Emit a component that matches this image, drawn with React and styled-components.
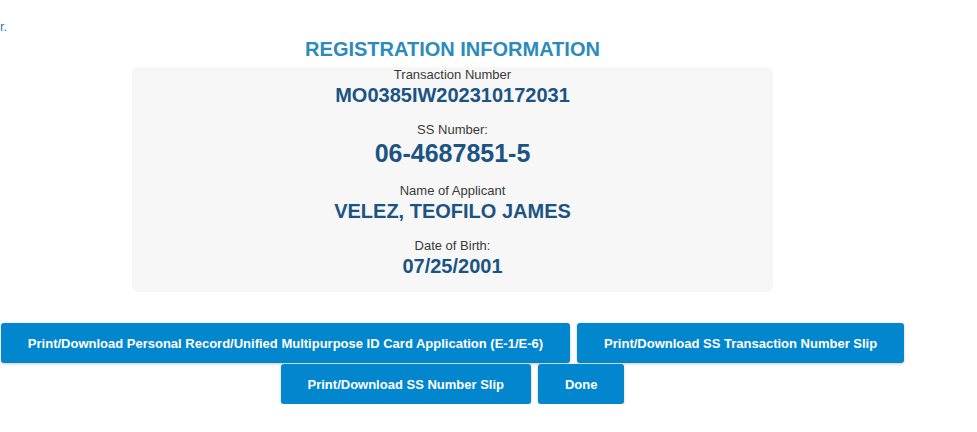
import React from "react";
import styled, { createGlobalStyle } from "styled-components";

const GlobalStyle = createGlobalStyle`
  html, body { margin: 0; padding: 0; background: #ffffff; }
  body { font-family: "Liberation Sans", Arial, sans-serif; }
`;

const Page = styled.div`
  width: 905px;
  display: flex;
  flex-direction: column;
  align-items: center;
`;

const TopNote = styled.div`
  align-self: flex-start;
  margin-top: 19px;
  font-size: 13px;
  line-height: 15px;
  color: #2a7fb8;
`;

const Title = styled.h2`
  margin: 4px 0 6px;
  font-size: 20px;
  line-height: 23px;
  font-weight: 700;
  color: #2b8bba;
  text-align: center;
`;

const Card = styled.div`
  width: 641px;
  box-sizing: border-box;
  background: #f7f7f7;
  border-radius: 6px;
  padding: 0 0 14px;
  display: flex;
  flex-direction: column;
  align-items: center;
  gap: 15px;
`;

const Field = styled.div`
  display: flex;
  flex-direction: column;
  align-items: center;
  gap: 2px;
`;

const Label = styled.div`
  font-size: 13px;
  line-height: 15px;
  color: #3a3a3a;
`;

const Value = styled.div`
  font-size: ${(p) => (p.$big ? "25px" : "20px")};
  line-height: ${(p) => (p.$big ? "29px" : "23px")};
  font-weight: 700;
  color: #1b5482;
`;

const Actions = styled.div`
  margin-top: 31px;
  display: flex;
  flex-direction: column;
  align-items: center;
  gap: 1px;
`;

const ButtonRow = styled.div`
  display: flex;
  justify-content: center;
  gap: 7px;
`;

const Button = styled.button`
  height: 40px;
  padding: 0 27px;
  border: none;
  border-radius: 3px;
  background: #0286ce;
  color: #ffffff;
  font-family: "Liberation Sans", Arial, sans-serif;
  font-size: 13px;
  font-weight: 700;
  box-shadow: 0 1px 3px rgba(0, 0, 0, 0.22);
  cursor: pointer;
  white-space: nowrap;
`;

const fields = [
  { label: "Transaction Number", value: "MO0385IW202310172031" },
  { label: "SS Number:", value: "06-4687851-5", big: true },
  { label: "Name of Applicant", value: "VELEZ, TEOFILO JAMES" },
  { label: "Date of Birth:", value: "07/25/2001" },
];

export default function App() {
  return (
    <>
      <GlobalStyle />
      <Page>
        <TopNote>r.</TopNote>
        <Title>REGISTRATION INFORMATION</Title>
        <Card>
          {fields.map((f) => (
            <Field key={f.label}>
              <Label>{f.label}</Label>
              <Value $big={f.big}>{f.value}</Value>
            </Field>
          ))}
        </Card>
        <Actions>
          <ButtonRow>
            <Button>Print/Download Personal Record/Unified Multipurpose ID Card Application (E-1/E-6)</Button>
            <Button>Print/Download SS Transaction Number Slip</Button>
          </ButtonRow>
          <ButtonRow>
            <Button>Print/Download SS Number Slip</Button>
            <Button>Done</Button>
          </ButtonRow>
        </Actions>
      </Page>
    </>
  );
}
